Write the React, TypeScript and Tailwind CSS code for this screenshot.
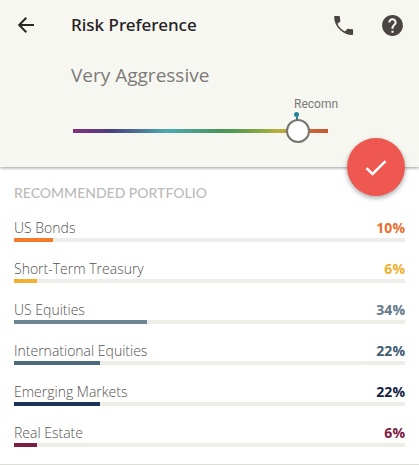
import { useState } from 'react';
import { MdHelp } from 'react-icons/md';

const HOLDINGS = [
    { name: "US Bonds", percent: 10, bar: "bg-[#f5792a]", text: "text-[#e8702f]" },
    { name: "Short-Term Treasury", percent: 6, bar: "bg-[#f3b02c]", text: "text-[#efb02c]" },
    { name: "US Equities", percent: 34, bar: "bg-[#6c8494]", text: "text-[#64798a]" },
    { name: "International Equities", percent: 22, bar: "bg-[#4a6a7d]", text: "text-[#3f5d72]" },
    { name: "Emerging Markets", percent: 22, bar: "bg-[#1a3358]", text: "text-[#15233f]" },
    { name: "Real Estate", percent: 6, bar: "bg-[#7d1c45]", text: "text-[#7d1c45]" },
];

function TopBar() {
    return (
        <div className="flex items-center h-[50px] px-[14px] text-[#4a4542]">
            <button type="button" aria-label="Back" className="text-[#2c2723]">
                <svg viewBox="0 0 24 24" className="size-6" fill="none" stroke="currentColor" strokeWidth="2">
                    <path d="M12.3 4.8 5.2 12l7.1 7.2M5.2 12H20" />
                </svg>
            </button>
            <h1 className="ml-[33px] flex-1 font-['Noto_Sans'] text-[17px] leading-6 font-medium text-[#24211f]">
                Risk Preference
            </h1>
            <button type="button" aria-label="Call">
                <svg viewBox="0 0 24 24" className="size-[25px]" fill="currentColor">
                    <path d="M3.8 2.8H7.8a.7.7 0 0 1 .7.7l.5 4.6-2.8 2.3c1.4 3.3 3.9 5.9 7.2 7.3l2.4-2.7 4.7.5a.7.7 0 0 1 .7.7v4.2a.8.8 0 0 1-.8.8C11.200 21.200 3 13 3 3.600a.8.8 0 0 1 .8-.8z" />
                </svg>
            </button>
            <button type="button" aria-label="Help" className="ml-6">
                <MdHelp size={25} />
            </button>
        </div>
    );
}

function RiskSlider() {
    const [risk, setRisk] = useState(92);

    return (
        <div className="relative ml-[73px] mr-[91px] pt-[29px]">
            {/* Recommended level marker */}
            <div className="absolute top-[6px] left-[221px] font-['Roboto'] text-[12px] leading-4 whitespace-nowrap text-[#777777]">
                Recomn
            </div>
            <div className="absolute top-[22px] left-[221px] flex flex-col items-center">
                <span className="size-[5px] rounded-full bg-[#27809a]" />
                <span className="h-1 w-[2px] bg-[#27809a]" />
            </div>
            <input
                type="range"
                aria-label="Risk level"
                min={0}
                max={100}
                value={risk}
                onChange={e => setRisk(Number(e.target.value))}
                className="relative block h-6 w-full appearance-none bg-transparent [&::-webkit-slider-runnable-track]:h-1 [&::-webkit-slider-runnable-track]:bg-[linear-gradient(90deg,#84307f_0%,#4a3f7c_15%,#4cabb3_37%,#4a9360_57%,#4f9b50_63%,#b2b03c_80%,#c9a13c_88%,#cb6238_94%,#c9552e_100%)] [&::-webkit-slider-thumb]:-mt-[10px] [&::-webkit-slider-thumb]:size-6 [&::-webkit-slider-thumb]:appearance-none [&::-webkit-slider-thumb]:rounded-full [&::-webkit-slider-thumb]:border-2 [&::-webkit-slider-thumb]:border-[#77736e] [&::-webkit-slider-thumb]:bg-white"
            />
        </div>
    );
}

export default function App() {
    return (
        <main className="border-b border-[#dcdcd8] bg-white">
            <header className="relative bg-[#f7f7f2] pb-6 shadow-[0_1px_3px_rgba(0,0,0,0.4)]">
                <TopBar />
                <p className="ml-[71px] pt-[11px] pb-px font-['Open_Sans'] text-[19px] leading-7 text-[#7d7a77]">
                    Very Aggressive
                </p>
                <RiskSlider />
                <button
                    type="button"
                    aria-label="Confirm"
                    className="absolute right-[14px] -bottom-[29px] flex size-[58px] items-center justify-center rounded-full bg-[#ee5850] text-white shadow-[0_2px_5px_rgba(0,0,0,0.35)]"
                >
                    <svg viewBox="0 0 28 28" className="size-7" fill="none" stroke="currentColor" strokeWidth="2.5">
                        <path d="M4.400 15.200 10.600 21 23.500 8.200" />
                    </svg>
                </button>
            </header>

            <section className="px-[14px] pt-4 pb-[17px]">
                <h2 className="font-['Lato'] text-[14px] leading-5 font-medium text-[#bcbab8]">
                    RECOMMENDED PORTFOLIO
                </h2>
                <ul className="mt-[15px] flex flex-col gap-[17px] font-['Open_Sans'] text-[14px] leading-5">
                    {HOLDINGS.map(h => (
                        <li key={h.name}>
                            <div className="flex justify-between">
                                <span className="font-light text-[#55524f]">{h.name}</span>
                                <span className={`font-bold ${h.text}`}>{h.percent}%</span>
                            </div>
                            <div className="h-1 bg-[#efede8]">
                                <div className={`h-full ${h.bar}`} style={{ width: `${h.percent}%` }} />
                            </div>
                        </li>
                    ))}
                </ul>
            </section>
        </main>
    );
}
